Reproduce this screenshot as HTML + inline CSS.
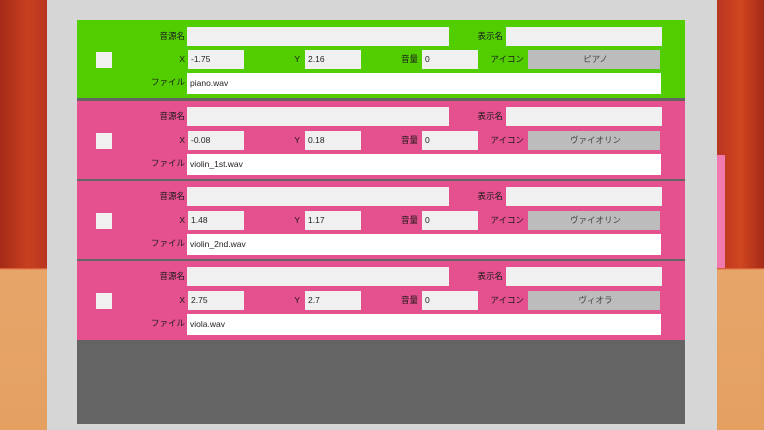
<!DOCTYPE html>
<html><head><meta charset="utf-8"><style>
*{margin:0;padding:0;box-sizing:border-box}
body{width:764px;height:430px;overflow:hidden;position:relative;font-family:"Liberation Sans","Noto Sans CJK JP",sans-serif;font-size:8px;color:#222;
background:linear-gradient(180deg,#b8311c 0,#c23a1e 60%,#d24a22 268px,#e7a56a 270px,#e3a060 100%)}
.curL{position:absolute;left:0;top:0;width:47px;height:268px;background:linear-gradient(90deg,#a52a18,#c8401f 60%,#b83520)}
.curR{position:absolute;right:0;top:0;width:47px;height:268px;background:linear-gradient(90deg,#b83520,#d0461f 50%,#a52a18)}
.panel{position:absolute;left:47px;top:0;width:670px;height:430px;background:#d6d6d6}
.list{position:absolute;left:77px;top:20px;width:608px;height:404px;background:#646464}
.row{position:absolute;left:0;width:608px;height:78px;background:#e5508f}
.row.g{background:#52ce00}
.row div{position:absolute}
.lb{text-align:right;width:60px;line-height:19px;font-size:8.5px;color:#1a1a1a}
.in{background:#f0f0f0;height:19px;line-height:19px;padding-left:3px;font-size:8.5px}
.wh{background:#fff}
.bt{background:#bcbcbc;text-align:center;color:#444}
.cb{left:19px;top:32px;width:16px;height:16px;background:#f0f0f0}
</style></head><body>
<div class="curL"></div><div class="curR"></div>
<div style="position:absolute;left:717px;top:155px;width:8px;height:113px;background:#f07ab0"></div>
<div class="panel"></div>
<div class="list">
<div class="row g" style="top:0">
<div class="cb"></div>
<div class="lb" style="left:48px;top:7px">音源名</div><div class="in" style="left:110px;top:7px;width:262px"></div>
<div class="lb" style="left:366px;top:7px">表示名</div><div class="in" style="left:429px;top:7px;width:156px"></div>
<div class="lb" style="left:48px;top:30px">X</div><div class="in" style="left:111px;top:30px;width:56px">-1.75</div>
<div class="lb" style="left:163px;top:30px">Y</div><div class="in" style="left:228px;top:30px;width:56px">2.16</div>
<div class="lb" style="left:281px;top:30px">音量</div><div class="in" style="left:345px;top:30px;width:56px">0</div>
<div class="lb" style="left:387px;top:30px">アイコン</div><div class="in bt" style="left:451px;top:30px;width:132px">ピアノ</div>
<div class="lb" style="left:48px;top:53px">ファイル</div><div class="in wh" style="left:110px;top:53px;width:474px;height:21px;line-height:21px">piano.wav</div>
</div>
<div class="row" style="top:81px">
<div class="cb"></div>
<div class="lb" style="left:48px;top:6px">音源名</div><div class="in" style="left:110px;top:6px;width:262px"></div>
<div class="lb" style="left:366px;top:6px">表示名</div><div class="in" style="left:429px;top:6px;width:156px"></div>
<div class="lb" style="left:48px;top:30px">X</div><div class="in" style="left:111px;top:30px;width:56px">-0.08</div>
<div class="lb" style="left:163px;top:30px">Y</div><div class="in" style="left:228px;top:30px;width:56px">0.18</div>
<div class="lb" style="left:281px;top:30px">音量</div><div class="in" style="left:345px;top:30px;width:56px">0</div>
<div class="lb" style="left:387px;top:30px">アイコン</div><div class="in bt" style="left:451px;top:30px;width:132px">ヴァイオリン</div>
<div class="lb" style="left:48px;top:53px">ファイル</div><div class="in wh" style="left:110px;top:53px;width:474px;height:21px;line-height:21px">violin_1st.wav</div>
</div>
<div class="row" style="top:161px">
<div class="cb"></div>
<div class="lb" style="left:48px;top:6px">音源名</div><div class="in" style="left:110px;top:6px;width:262px"></div>
<div class="lb" style="left:366px;top:6px">表示名</div><div class="in" style="left:429px;top:6px;width:156px"></div>
<div class="lb" style="left:48px;top:30px">X</div><div class="in" style="left:111px;top:30px;width:56px">1.48</div>
<div class="lb" style="left:163px;top:30px">Y</div><div class="in" style="left:228px;top:30px;width:56px">1.17</div>
<div class="lb" style="left:281px;top:30px">音量</div><div class="in" style="left:345px;top:30px;width:56px">0</div>
<div class="lb" style="left:387px;top:30px">アイコン</div><div class="in bt" style="left:451px;top:30px;width:132px">ヴァイオリン</div>
<div class="lb" style="left:48px;top:53px">ファイル</div><div class="in wh" style="left:110px;top:53px;width:474px;height:21px;line-height:21px">violin_2nd.wav</div>
</div>
<div class="row" style="top:241px;height:79px">
<div class="cb"></div>
<div class="lb" style="left:48px;top:6px">音源名</div><div class="in" style="left:110px;top:6px;width:262px"></div>
<div class="lb" style="left:366px;top:6px">表示名</div><div class="in" style="left:429px;top:6px;width:156px"></div>
<div class="lb" style="left:48px;top:30px">X</div><div class="in" style="left:111px;top:30px;width:56px">2.75</div>
<div class="lb" style="left:163px;top:30px">Y</div><div class="in" style="left:228px;top:30px;width:56px">2.7</div>
<div class="lb" style="left:281px;top:30px">音量</div><div class="in" style="left:345px;top:30px;width:56px">0</div>
<div class="lb" style="left:387px;top:30px">アイコン</div><div class="in bt" style="left:451px;top:30px;width:132px">ヴィオラ</div>
<div class="lb" style="left:48px;top:53px">ファイル</div><div class="in wh" style="left:110px;top:53px;width:474px;height:21px;line-height:21px">viola.wav</div>
</div>
</div>
</body></html>
